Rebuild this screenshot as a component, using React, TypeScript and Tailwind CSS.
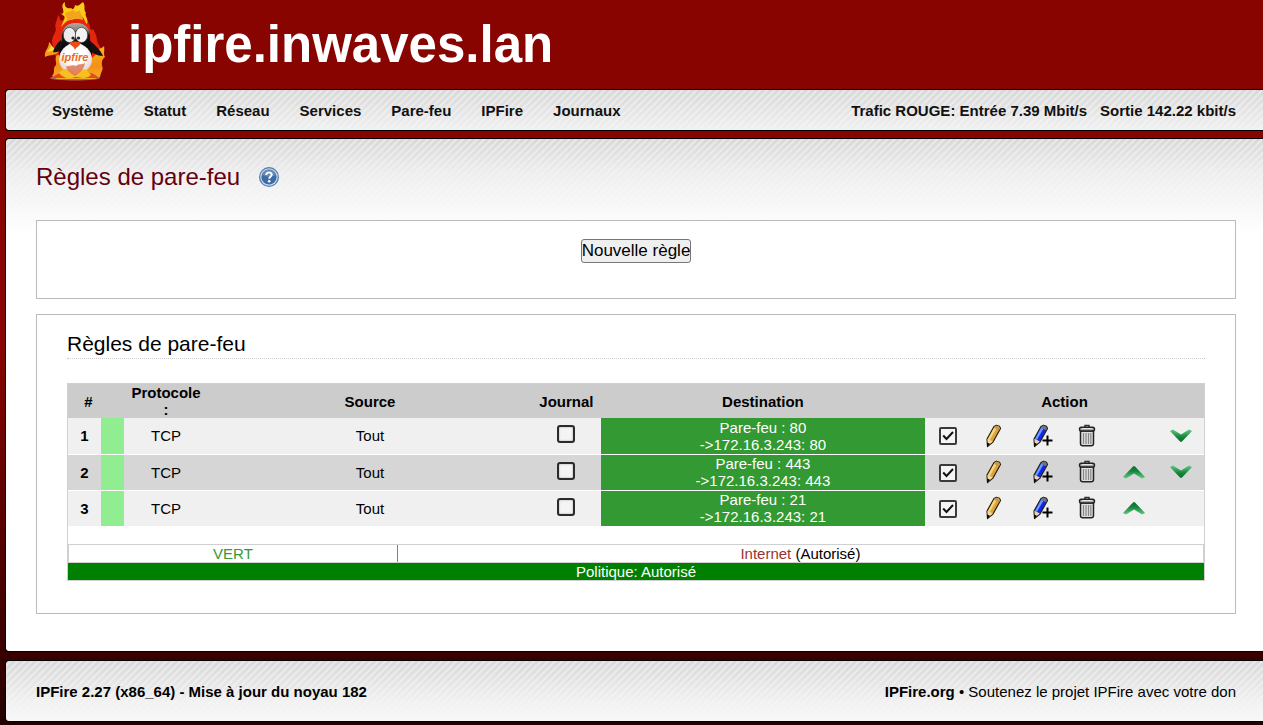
import React from "react";

const menu = ["Système", "Statut", "Réseau", "Services", "Pare-feu", "IPFire", "Journaux"];

const rules = [
  { id: 1, port: "80", up: false, down: true },
  { id: 2, port: "443", up: true, down: true },
  { id: 3, port: "21", up: true, down: false },
];

const tallStripes =
  "bg-[linear-gradient(to_bottom,rgba(244,244,244,0)_0px,rgba(244,244,244,0.8)_35px,#fff_95px),repeating-linear-gradient(135deg,#d8d8d8_0px,#d8d8d8_2px,#e8e8e8_3px,#e8e8e8_4px,#d8d8d8_5px)]";
const barStripes =
  "bg-[linear-gradient(to_bottom,rgba(246,246,246,0)_0px,rgba(246,246,246,0.85)_42px,#f8f8f8_62px),repeating-linear-gradient(135deg,#d8d8d8_0px,#d8d8d8_2px,#e8e8e8_3px,#e8e8e8_4px,#d8d8d8_5px)]";

function Logo() {
  return (
    <svg width="62" height="89" viewBox="0 0 62 89" aria-hidden="true">
      <defs>
        <linearGradient id="fire" x1="0" y1="0" x2="0" y2="1">
          <stop offset="0" stopColor="#f9b423" />
          <stop offset="0.6" stopColor="#f39018" />
          <stop offset="1" stopColor="#f5b021" />
        </linearGradient>
        <linearGradient id="head" x1="0" y1="0" x2="0" y2="1">
          <stop offset="0" stopColor="#b5a9a0" />
          <stop offset="0.18" stopColor="#8d857f" />
          <stop offset="0.32" stopColor="#1c1a19" />
          <stop offset="0.6" stopColor="#0c0c0c" />
        </linearGradient>
        <radialGradient id="belly" cx="0.5" cy="0.4" r="0.6">
          <stop offset="0.5" stopColor="#fff" />
          <stop offset="1" stopColor="#ddd3cf" />
        </radialGradient>
      </defs>
      <ellipse cx="31" cy="78" rx="25" ry="2.5" fill="#b98a82" opacity="0.7" />
      <path d="M9 46C6 38 11 35 12 29C10 24 13 22 14 15C17 18 15 22 19 20L24 12L42 15C42 22 47 24 46 29C49 31 50 28 50 31C54 37 52 41 55 45L58 51L47 60L12 58Z" fill="#e3260d" />
      <path d="M16 13C19 15 20 13 19 9C18 6 18 4 21 2C20 7 23 9 27 8C29 11 31 7 31 5C34 7 35 5 39 2C42 6 39 9 42 13C40 16 45 18 43 24C40 21 41 18 37 16C35 21 32 17 28 20C25 18 22 22 17 27C19 21 22 18 20 16Z" fill="#f9cc1c" />
      <path d="M21 14C25 10 27 13 29 9C30 13 34 12 36 10C36 15 39 14 39 20L31 18L24 21Z" fill="#f5a31c" />
      <path d="M1 57C0 50 5 49 5 42C8 44 7 47 10 48L14 52C12 56 7 54 1 57Z" fill="#f39a1c" />
      <path d="M3 52C5 49 7 48 7 45L12 50Z" fill="#fbdc3a" />
      <path d="M8 76C12 72 8 68 12 65C13 62 10 59 13 55L48 58C51 56 51 54 55 52C54 47 58 49 60 46C61 50 59 54 61 57C57 60 58 63 58 66C60 69 57 71 56 77L50 79L13 79Z" fill="url(#fire)" />
      <path d="M8 78C12 73 18 74 22 69L29 75L38 70C43 73 50 72 55 78Z" fill="#e9491b" />
      <path d="M17 40C13 43 10 48 9 52C14 53 17 50 20 48ZM45 40C50 44 56 49 59 56C53 56 48 53 44 49Z" fill="#161212" />
      <path d="M32 23C21 23 17 30 18 39C18 45 13 51 16 61L47 61C50 52 46 45 46 39C47 29 42 23 32 23Z" fill="url(#head)" />
      <path d="M31 42C22 44 15 51 15 59C15 69 22 72 31 74C41 72 48 69 48 59C48 51 41 44 31 42Z" fill="url(#belly)" />
      <ellipse cx="25.5" cy="35" rx="6.2" ry="7.6" fill="#ededed" stroke="#2a2a2a" strokeWidth="0.6" />
      <ellipse cx="37.5" cy="35" rx="6.2" ry="7.6" fill="#f3f3f3" stroke="#2a2a2a" strokeWidth="0.6" />
      <circle cx="29" cy="38" r="1.6" fill="#222" />
      <circle cx="34.5" cy="38" r="1.6" fill="#222" />
      <path d="M25 43C28 41 34 41 37 43C35 47 32 47 31 50C30 46 27 46 25 43Z" fill="#f04b16" />
      <path d="M15 73C20 67 26 68 29 72L32 75L36 70C42 68 44 71 47 75C43 79 37 78 32 77C26 79 20 79 15 73Z" fill="#f8c022" />
      <path d="M22 66C26 67 28 64 32 66C36 63 38 65 41 63C40 69 36 73 31 76C26 73 23 71 22 66Z" fill="#df7655" opacity="0.85" />
      <text x="31" y="61" textAnchor="middle" fontSize="11" fontWeight="700" fontStyle="italic" fontFamily="Liberation Sans, sans-serif" fill="#ee6a1c">ipfire</text>
    </svg>
  );
}

function HelpIcon() {
  return (
    <svg width="20" height="20" viewBox="0 0 20 20" aria-hidden="true">
      <circle cx="10" cy="10" r="10" fill="#4f7ab0" />
      <circle cx="10" cy="10" r="8.8" fill="#c9d9ea" />
      <circle cx="10" cy="10" r="7.6" fill="#3f6ba5" />
      <path d="M3.2 8a7 7 0 0 1 13.6 0c-4 2-9.600 2-13.600 0Z" fill="#7f9fc8" opacity="0.6" />
      <path d="M7.300 8C7.200 4.600 12.900 4.700 12.700 7.700C12.600 9.600 10.300 9.500 10.200 11.800" fill="none" stroke="#fff" strokeWidth="2" />
      <circle cx="10.200" cy="14.300" r="1.300" fill="#fff" />
    </svg>
  );
}

function Pencil({ blue = false }: { blue?: boolean }) {
  return (
    <svg width="24" height="24" viewBox="0 0 24 24" aria-hidden="true">
      <path d="M12 2.5L14.5 1.2L17.5 2.3L18.5 4.5L11 18L5.500 22.500L5 15Z" fill={blue ? "#1226f0" : "#dca437"} stroke="#26210f" strokeWidth="1.2" strokeLinejoin="round" />
      <path d="M12.5 3L6 15L7.800 16L14.800 4Z" fill={blue ? "#6f9bf8" : "#f6d583"} />
      <path d="M13 2.300L14.700 1.600L17.200 2.600L18 4.500L16.800 6.200L12.200 4Z" fill={blue ? "#70737c" : "#c29a55"} />
      <path d="M5.400 14.800L10.800 17.600L6 21.500Z" fill="#f3d9a0" />
      <path d="M5 18.500L8 19.800L5.400 22.800Z" fill="#050505" />
      {blue && <path d="M18.500 11.500V21.500M13.500 16.500H23.500" stroke="#000" strokeWidth="2" />}
    </svg>
  );
}

function Trash() {
  return (
    <svg width="20" height="24" viewBox="0 0 20 24" aria-hidden="true">
      <path d="M8 3V1.500H12V3" fill="none" stroke="#333" strokeWidth="1.5" />
      <path d="M3.500 7H16.500V19.500Q16.500 21.800 14.200 21.800H5.800Q3.500 21.800 3.500 19.500Z" fill="#dedede" stroke="#222" strokeWidth="1.5" />
      <path d="M6.500 9V20M9 9V20M11.500 9V20M13.800 9V20" stroke="#858585" strokeWidth="1.2" />
      <rect x="2.500" y="3.200" width="15" height="3.800" rx="1.800" fill="#a6a6a6" stroke="#222" strokeWidth="1.4" />
      <path d="M5 4.600H15" stroke="#e8e8e8" />
    </svg>
  );
}

function Arrow({ down = false }: { down?: boolean }) {
  const id = down ? "arrow-down" : "arrow-up";
  return (
    <svg width="24" height="16" viewBox="0 0 24 16" aria-hidden="true">
      <defs>
        <linearGradient id={id} x1="0" y1={down ? "1" : "0"} x2="0" y2={down ? "0" : "1"}>
          <stop offset="0" stopColor="#08702f" />
          <stop offset="0.4" stopColor="#16853c" />
          <stop offset="1" stopColor="#62cb83" />
        </linearGradient>
      </defs>
      <path
        d={down ? "M1 3L4 1.500L12 6.500L20 1.500L23 3L13 13.500Q12 14.300 11 13.500Z" : "M1 13L11 2.500Q12 1.700 13 2.500L23 13L20 14.500L12 9.500L4 14.500Z"}
        fill={`url(#${id})`}
      />
    </svg>
  );
}

function Toggle({ label, checked, bold }: { label: string; checked: boolean; bold: boolean }) {
  return (
    <label className="inline-grid size-[18px] place-items-center align-middle">
      <input
        type="checkbox"
        aria-label={label}
        defaultChecked={checked}
        className={
          bold
            ? "peer col-start-1 row-start-1 size-[18px] appearance-none rounded-[3px] border-2 border-[#2b2b2b] bg-[#f4f4f4] shadow-[inset_0_0_2px_#999]"
            : "peer col-start-1 row-start-1 size-[18px] appearance-none rounded-[2px] border-2 border-[#3a3a3a] bg-[#f4f4f4]"
        }
      />
      <svg className="pointer-events-none invisible col-start-1 row-start-1 peer-checked:visible" width="12" height="12" viewBox="0 0 12 12" aria-hidden="true">
        <path d="M1.200 5.500L4.500 9L11 2" fill="none" stroke="#111" strokeWidth="2" />
      </svg>
    </label>
  );
}

function IconButton({ label, children }: { label: string; children: React.ReactNode }) {
  return (
    <button type="button" aria-label={label} className="inline-flex h-6 items-center justify-center align-middle">
      {children}
    </button>
  );
}

export default function App() {
  return (
    <div className="min-h-screen bg-[linear-gradient(to_bottom,#880400_0%,#880400_48%,#240000_100%)] pb-[3px] pl-[5px] font-['Liberation_Sans',Arial,sans-serif] text-[15px] leading-[17px] text-black">
      <header className="flex h-[89px] items-center gap-[22px] pl-[39px]">
        <Logo />
        <h1 className="text-[51px] leading-[56px] font-bold text-white">ipfire.inwaves.lan</h1>
      </header>

      <div className={`flex h-[42px] items-center justify-between rounded-l-[4px] border border-r-0 border-black pr-[27px] pl-[46px] font-bold text-[#111] ${barStripes}`}>
        <nav className="flex gap-[30px]">
          {menu.map((m) => (
            <a key={m} href="#">{m}</a>
          ))}
        </nav>
        <div className="flex gap-[13px]">
          <span>Trafic ROUGE: Entrée 7.39 Mbit/s</span>
          <span>Sortie 142.22 kbit/s</span>
        </div>
      </div>

      <main className={`mt-[7px] rounded-l-[4px] border border-r-0 border-black pt-[22px] pr-[27px] pb-[37px] pl-[30px] ${tallStripes}`}>
        <div className="flex items-center gap-[19px]">
          <h2 className="text-[24px] leading-8 text-[#66000f]">Règles de pare-feu</h2>
          <a href="#" aria-label="Aide"><HelpIcon /></a>
        </div>

        <section className="mt-[27px] border border-[#bbb] bg-white pt-[18px] pb-[35px] text-center">
          <button type="button" className="mx-auto block h-6 rounded-[3px] border border-[#767676] bg-[#efefef] text-[17px] leading-5">
            Nouvelle règle
          </button>
        </section>

        <section className="mt-[15px] border border-[#bbb] bg-white px-[30px] pt-[17px] pb-8">
          <h3 className="border-b border-dotted border-[#ccc] pb-[2px] text-[21px] leading-6">Règles de pare-feu</h3>

          <div className="mt-6 border border-[#d0d0d0]">
            <table className="w-full table-fixed border-collapse text-center">
              <colgroup>
                <col className="w-[33px]" />
                <col className="w-[23px]" />
                <col className="w-[84px]" />
                <col />
                <col className="w-[69px]" />
                <col />
                <col className="w-[46px]" />
                <col className="w-[47px]" />
                <col className="w-[46px]" />
                <col className="w-[47px]" />
                <col className="w-[47px]" />
                <col className="w-[46px]" />
              </colgroup>
              <thead>
                <tr className="h-[34px] bg-[#ccc]">
                  <th className="pl-2">#</th>
                  <th />
                  <th>Protocole<br />:</th>
                  <th>Source</th>
                  <th>Journal</th>
                  <th>Destination</th>
                  <th colSpan={6}>Action</th>
                </tr>
              </thead>
              <tbody>
                {rules.map((r) => (
                  <tr key={r.id} className="h-9 border-b border-white bg-[#f0f0f0] last:border-b-0 even:bg-[#d6d6d6]">
                    <th scope="row">{r.id}</th>
                    <td className="bg-[#90ee90]" />
                    <td>TCP</td>
                    <td>Tout</td>
                    <td className="pb-1"><Toggle bold label={`Journal ${r.id}`} checked={false} /></td>
                    <td className="bg-[#339933] text-white">
                      Pare-feu : {r.port}
                      <br />
                      {`->172.16.3.243: ${r.port}`}
                    </td>
                    <td><Toggle bold={false} label={`Activer ${r.id}`} checked /></td>
                    <td><IconButton label="Modifier"><Pencil /></IconButton></td>
                    <td><IconButton label="Copier"><Pencil blue /></IconButton></td>
                    <td><IconButton label="Supprimer"><Trash /></IconButton></td>
                    <td>{r.up && <IconButton label="Monter"><Arrow /></IconButton>}</td>
                    <td>{r.down && <IconButton label="Descendre"><Arrow down /></IconButton>}</td>
                  </tr>
                ))}
              </tbody>
            </table>

            <div className="mt-[18px] flex border border-[#d0d0d0] text-center">
              <div className="w-[29%] border-r border-[#808080] text-[#339933]">VERT</div>
              <div className="flex-1"><span className="text-[#993333]">Internet</span> (Autorisé)</div>
            </div>
            <div className="bg-[#008000] text-center text-white">Politique: Autorisé</div>
          </div>
        </section>
      </main>

      <footer className={`mt-2 flex h-[62px] items-center justify-between rounded-l-[4px] border border-r-0 border-black pr-[27px] pl-[30px] ${barStripes}`}>
        <strong>IPFire 2.27 (x86_64) - Mise à jour du noyau 182</strong>
        <span>
          <a href="#" className="font-bold">IPFire.org</a> • <a href="#">Soutenez le projet IPFire avec votre don</a>
        </span>
      </footer>
    </div>
  );
}
